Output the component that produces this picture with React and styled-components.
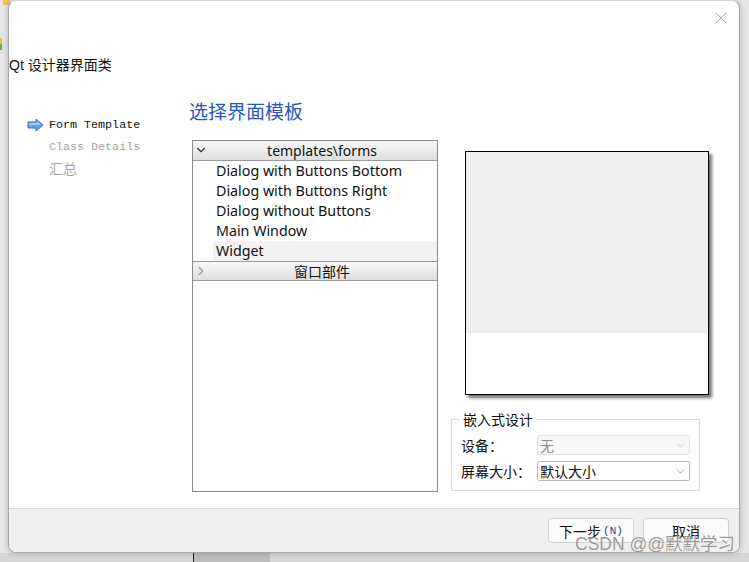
import React from 'react'
import styled, { createGlobalStyle } from 'styled-components'
import { ChevronDown, ChevronRight, X } from 'lucide-react'

const cjk = '"Noto Sans CJK SC", sans-serif'
const ui = `"Noto Sans", "Noto Sans CJK SC", sans-serif`
const mono = `"Liberation Mono", "Noto Sans CJK SC", monospace`

const GlobalStyle = createGlobalStyle`
  html, body { margin: 0; padding: 0; width: 749px; height: 562px; overflow: hidden; }
  * { box-sizing: border-box; }
`
const Stage = styled.div`
  position: relative;
  width: 749px; height: 562px;
  padding-left: 8px;
  background:
    linear-gradient(#f2c14e, #f2c14e) 3px 0 / 7px 5px no-repeat,
    linear-gradient(#e3c04f 0 50%, #6aa84f 50%) 0 38px / 2px 12px no-repeat,
    linear-gradient(#222, #222) 193px 553px / 1px 9px no-repeat,
    linear-gradient(#bdbdbd, #bdbdbd) 194px 553px / 76px 9px no-repeat,
    linear-gradient(#d6d6d6, #d6d6d6) 0 553px / 749px 9px no-repeat,
    #e6e6e6;
`
const Dialog = styled.div`
  position: relative;
  width: 732px; height: 553px;
  display: flex; flex-direction: column;
  background: #fff;
  border: 1px solid #a8a8a8;
  border-top-color: #d4d4d4;
  border-radius: 8px;
  box-shadow: 0 0 6px rgba(0, 0, 0, 0.22);
  overflow: hidden;
  font-family: ${ui};
`
const CloseButton = styled.div`
  position: absolute;
  top: 7px; right: 8px;
  width: 20px; height: 20px;
  color: #7d7d7d;
  display: flex; align-items: center; justify-content: center;
`
const Title = styled.div`
  height: 96px;
  padding-top: 54px;
  font-size: 14px;
  line-height: 20px;
  color: #111;
  font-family: "Liberation Sans", ${cjk};
`
const Body = styled.div`
  flex: 1;
  display: flex;
  min-height: 0;
`
const Side = styled.div`
  width: 180px;
  padding: 17px 0 0 18px;
  display: flex; flex-direction: column;
`
const Step = styled.div`
  display: flex; align-items: center;
  height: 22px;
  padding-bottom: ${p => (p.$cjk ? '3px' : '0')};
  font-family: ${mono};
  font-size: ${p => (p.$cjk ? '14px' : '11.7px')};
  color: ${p => (p.$active ? '#111' : '#a3a3a3')};
`
const StepMark = styled.span`
  width: 22px;
  flex: none;
  display: flex; align-items: center;
`
const Main = styled.div`
  flex: 1;
  min-width: 0;
`
const Heading = styled.div`
  height: 43px;
  padding-top: 1px;
  font-family: ${cjk};
  font-size: 19px;
  line-height: 26px;
  color: #2757c0;
`
const Columns = styled.div`
  display: flex;
  padding-left: 3px;
`
const ListBox = styled.div`
  width: 246px; height: 352px;
  border: 1px solid #8a8d96;
  flex: none;
`
const GroupHeader = styled.div`
  position: relative;
  height: 20px;
  padding: 0 0 1px 14px;
  display: flex; align-items: center; justify-content: center;
  background: linear-gradient(#f8f8f8, #dedede);
  border-bottom: 1px solid #9a9a9a;
  border-top: ${p => (p.$first ? 'none' : '1px solid #9a9a9a')};
  font-size: 14px;
  color: #111;
`
const Caret = styled.span`
  position: absolute;
  left: 1px; top: 2px;
  display: flex;
  color: ${p => p.$color};
`
const Item = styled.div`
  height: 20px;
  margin-left: ${p => (p.$hover ? '20px' : '0')};
  padding-left: ${p => (p.$hover ? '3px' : '23px')};
  background: ${p => (p.$hover ? '#f2f2f2' : 'transparent')};
  font-size: 14.27px;
  line-height: 20px;
  color: #111;
  white-space: nowrap;
`
const Right = styled.div`
  flex: 1;
  padding: 11px 0 0 13px;
`
const Preview = styled.div`
  width: 244px; height: 244px;
  margin-left: 14px;
  border: 1px solid #000;
  background: #fff;
  box-shadow: 3px 3px 3px rgba(0, 0, 0, 0.55);
`
const PreviewFill = styled.div`
  height: 181px;
  background: #efefef;
`
const Group = styled.fieldset`
  width: 249px; height: 80px;
  margin: 16px 0 0 0;
  padding: 5px 9px 0;
  border: 1px solid #dcdcdc;
  font-family: ${cjk};
`
const Legend = styled.legend`
  padding: 0 4px;
  margin-left: -2px;
  font-size: 14px;
  line-height: 16px;
  color: #111;
`
const FormRow = styled.div`
  display: flex; align-items: center;
  height: 26px;
  font-size: 14px;
  color: #111;
`
const FormLabel = styled.span`
  width: 76px;
  flex: none;
`
const Combo = styled.div`
  width: 153px; height: 20px;
  padding: 0 2px 0 2px;
  display: flex; align-items: center; justify-content: space-between;
  font-size: 14px;
  border-radius: 2px;
  border: 1px solid ${p => (p.$disabled ? '#e4e4e4' : '#b8b8b8')};
  background: ${p => (p.$disabled ? '#f7f7f7' : '#fff')};
  color: ${p => (p.$disabled ? '#8c8c8c' : '#111')};
`
const Footer = styled.div`
  height: 44px;
  flex: none;
  display: flex; justify-content: flex-end; gap: 9px;
  padding: 9px 10px 0 0;
  background: #efefef;
  border-top: 1px solid #d8d8d8;
`
const Button = styled.div`
  width: 86px; height: 25px;
  display: flex; align-items: center; justify-content: center;
  background: #fbfbfb;
  border: 1px solid #d2d2d2;
  border-radius: 4px;
  font-family: ${cjk};
  font-size: 14px;
  color: #111;
`
const Mnemonic = styled.span`
  font-family: "Liberation Mono", monospace;
  font-size: 11px;
  margin-left: 2px;
  color: #1d3f8a;
`
const Watermark = styled.div`
  position: absolute;
  left: 575px; top: 532px;
  font-family: "Liberation Sans", ${cjk};
  font-size: 17.5px;
  line-height: 24px;
  white-space: nowrap;
  color: rgba(120, 120, 120, 0.75);
  text-shadow: 0 0 1px rgba(255, 255, 255, 0.9);
`

const StepArrow = () => (
  <svg width="17" height="14" viewBox="0 0 17 14">
    <path d="M1 4 H9 V1 L16 7 L9 13 V10 H1 Z" fill="#6f9fe8" stroke="#3d6fb8" strokeWidth="1" />
    <path d="M2 5 H10 V3 L14 7 H2 Z" fill="#a9c8f5" />
  </svg>
)

const templates = [
  'Dialog with Buttons Bottom',
  'Dialog with Buttons Right',
  'Dialog without Buttons',
  'Main Window',
]

function App() {
  return (
    <Stage>
      <GlobalStyle />
      <Dialog>
        <CloseButton><X size={20} strokeWidth={0.8} /></CloseButton>
        <Title>Qt 设计器界面类</Title>
        <Body>
          <Side>
            <Step $active><StepMark><StepArrow /></StepMark>Form Template</Step>
            <Step><StepMark />Class Details</Step>
            <Step $cjk><StepMark />汇总</Step>
          </Side>
          <Main>
            <Heading>选择界面模板</Heading>
            <Columns>
              <ListBox>
                <GroupHeader $first>
                  <Caret $color="#333"><ChevronDown size={14} strokeWidth={2} /></Caret>
                  templates\forms
                </GroupHeader>
                {templates.map(name => <Item key={name}>{name}</Item>)}
                <Item $hover>Widget</Item>
                <GroupHeader>
                  <Caret $color="#999"><ChevronRight size={14} strokeWidth={2} /></Caret>
                  窗口部件
                </GroupHeader>
              </ListBox>
              <Right>
                <Preview><PreviewFill /></Preview>
                <Group>
                  <Legend>嵌入式设计</Legend>
                  <FormRow>
                    <FormLabel>设备：</FormLabel>
                    <Combo $disabled>无<ChevronDown size={13} strokeWidth={1} color="#b5b5b5" /></Combo>
                  </FormRow>
                  <FormRow>
                    <FormLabel>屏幕大小：</FormLabel>
                    <Combo>默认大小<ChevronDown size={13} strokeWidth={1} color="#444" /></Combo>
                  </FormRow>
                </Group>
              </Right>
            </Columns>
          </Main>
        </Body>
        <Footer>
          <Button>下一步<Mnemonic>(N)</Mnemonic></Button>
          <Button>取消</Button>
        </Footer>
      </Dialog>
      <Watermark>CSDN @@默默学习</Watermark>
    </Stage>
  )
}

export default App
